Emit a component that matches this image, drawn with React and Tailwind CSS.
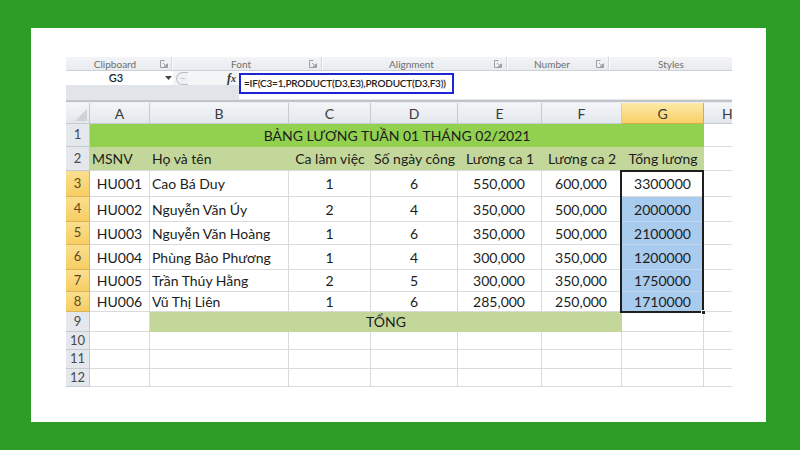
import React from "react";

// 列の幅 (行番号, A..H)
const rows = [
  { n: 3, h: "h-[26px]", a: "HU001", b: "Cao Bá Duy", c: "1", d: "6", e: "550,000", f: "600,000", g: "3300000" },
  { n: 4, h: "h-[25px]", a: "HU002", b: "Nguyễn Văn Úy", c: "2", d: "4", e: "350,000", f: "500,000", g: "2000000" },
  { n: 5, h: "h-[23px]", a: "HU003", b: "Nguyễn Văn Hoàng", c: "1", d: "6", e: "350,000", f: "500,000", g: "2100000" },
  { n: 6, h: "h-[25px]", a: "HU004", b: "Phùng Bảo Phương", c: "1", d: "4", e: "300,000", f: "350,000", g: "1200000" },
  { n: 7, h: "h-[22px]", a: "HU005", b: "Trần Thúy Hằng", c: "2", d: "5", e: "300,000", f: "350,000", g: "1750000" },
  { n: 8, h: "h-[20px]", a: "HU006", b: "Vũ Thị Liên", c: "1", d: "6", e: "285,000", f: "250,000", g: "1710000" },
];

const emptyRows = [
  { n: 10, h: "h-[18px]" },
  { n: 11, h: "h-[19px]" },
  { n: 12, h: "h-[18px]" },
];

const Launcher = () => (
  <svg width="8" height="8" viewBox="0 0 8 8" className="shrink-0">
    <path d="M0.5 0.5h4M0.5 0.5v7h7v-4" stroke="#9aa0a8" fill="none" />
    <path d="M3 3l3.5 3.5M4 6.5h2.5V4" stroke="#9aa0a8" fill="none" />
  </svg>
);

const RowHead = ({ n, hl }) => (
  <div
    className={
      hl
        ? "w-[24px] shrink-0 flex items-center justify-center bg-gradient-to-b from-[#fbdf8f] to-[#f6cd62] border-r border-b border-[#d8b45a] text-[13px] text-[#5a4a1c]"
        : "w-[24px] shrink-0 flex items-center justify-center bg-[#e4e7ec] border-r border-b border-[#c6cbd2] text-[13px] text-[#4a4a4a]"
    }
  >
    {n}
  </div>
);

const G = "border-r border-b border-[#dadada]";

const ColHead = ({ w, label, hl }) => (
  <div
    className={
      hl
        ? `${w} shrink-0 flex items-center justify-center bg-gradient-to-b from-[#fdeaa6] to-[#f8d064] border-r border-b border-[#d3ac52] text-[14px] text-[#3a3a3a]`
        : `${w} shrink-0 flex items-center justify-center bg-gradient-to-b from-[#f4f6f8] to-[#e3e7ec] border-r border-b border-[#c6cbd2] text-[14px] text-[#3a3a3a]`
    }
  >
    {label}
  </div>
);

export default function App() {
  return (
    <div className="w-[800px] h-[450px] bg-[#2c9e25] pt-[28px] pl-[31px] font-['Lato',sans-serif]">
      <div className="w-[735px] h-[394px] bg-white pt-[29px] pl-[35px]">
        <div className="w-[666px] overflow-hidden">
          {/* ribbon group labels */}
          <div className="h-[14px] flex bg-gradient-to-b from-[#f3f4f6] to-[#e8ebef] border-b border-[#cdd1d7] text-[10px] text-[#6f6f6f] leading-none">
            <div className="w-[106px] shrink-0 flex items-center pr-[3px] border-r border-[#d2d6dc]">
              <span className="flex-1 text-center pl-[4px]">Clipboard</span>
              <Launcher />
            </div>
            <div className="w-[150px] shrink-0 flex items-center pr-[4px] border-r border-[#d2d6dc] border-l border-l-white">
              <span className="flex-1 text-center">Font</span>
              <Launcher />
            </div>
            <div className="w-[185px] shrink-0 flex items-center pr-[4px] border-r border-[#d2d6dc] border-l border-l-white">
              <span className="flex-1 text-center pl-[6px]">Alignment</span>
              <Launcher />
            </div>
            <div className="w-[102px] shrink-0 flex items-center pr-[4px] border-r border-[#d2d6dc] border-l border-l-white">
              <span className="flex-1 text-center">Number</span>
              <Launcher />
            </div>
            <div className="w-[123px] shrink-0 flex items-center border-l border-l-white">
              <span className="flex-1 text-center">Styles</span>
            </div>
          </div>

          {/* formula bar */}
          <div className="h-[28px] flex">
            <div className="w-[173px] shrink-0 flex flex-col">
              <div className="h-[14px] flex">
                <div className="w-[107px] bg-white flex items-center relative">
                  <span className="flex-1 text-center text-[11px] font-semibold text-[#222] pl-[1px]">G3</span>
                  <svg width="7" height="4" viewBox="0 0 7 4" className="mr-[1px]">
                    <path d="M0 0h7L3.5 4z" fill="#444" />
                  </svg>
                </div>
                <div className="flex-1 bg-[#f4f5f7] flex items-center">
                  <div className="ml-[3px] w-[12px] h-[13px] rounded-l-full border border-r-0 border-[#b9bec5] bg-[#eef0f3] flex items-center justify-center">
                    <div className="w-[4px] h-[1px] bg-[#c3c7cd]" />
                  </div>
                  <span className="ml-auto mr-[3px] text-[12px] italic font-bold font-['Liberation_Serif',serif] text-[#333] leading-none">
                    f<span className="text-[10px]">x</span>
                  </span>
                </div>
              </div>
              <div className="flex-1 bg-[#e1e4e9]" />
            </div>
            <div className="flex-1 bg-white pt-[2px]">
              <div className="w-[215px] h-[21px] border-2 border-[#1c24d4] flex items-center pl-[3px] text-[10px] font-semibold text-[#1e1e1e] tracking-[-0.2px] whitespace-nowrap">
                =IF(C3=1,PRODUCT(D3,E3),PRODUCT(D3,F3))
              </div>
            </div>
          </div>
          <div className="h-[1px] bg-[#e4e6e9]" />
          <div className="h-[2px] bg-[#bfc4ca]" />
          <div className="h-[1px] bg-[#eceef1]" />

          {/* sheet grid */}
          <div className="relative w-[718px] text-[14px] text-[#1c1c1c]">
            <div className="h-[21px] flex">
              <div className="w-[24px] shrink-0 bg-gradient-to-b from-[#f4f6f8] to-[#e3e7ec] border-r border-b border-[#c6cbd2] relative">
                <svg width="12" height="12" viewBox="0 0 12 12" className="absolute right-[2px] bottom-[2px]">
                  <path d="M12 0V12H0z" fill="#cfd3d9" />
                </svg>
              </div>
              <ColHead w="w-[60px]" label="A" />
              <ColHead w="w-[139px]" label="B" />
              <ColHead w="w-[82px]" label="C" />
              <ColHead w="w-[87px]" label="D" />
              <ColHead w="w-[84px]" label="E" />
              <ColHead w="w-[80px]" label="F" />
              <ColHead w="w-[82px]" label="G" hl />
              <div className="w-[80px] shrink-0 flex items-center pl-[18px] bg-gradient-to-b from-[#f4f6f8] to-[#e3e7ec] border-b border-[#c6cbd2] text-[14px] text-[#3a3a3a]">
                H
              </div>
            </div>

            {/* row 1 */}
            <div className="h-[23px] flex">
              <RowHead n={1} />
              <div className="w-[614px] shrink-0 bg-[#92d050] flex items-center justify-center border-b border-[#92d050]">
                BẢNG LƯƠNG TUẦN 01 THÁNG 02/2021
              </div>
              <div className={`w-[80px] shrink-0 ${G}`} />
            </div>

            {/* row 2 */}
            <div className="h-[24px] flex">
              <RowHead n={2} />
              <div className="w-[614px] shrink-0 bg-[#c4d79b] flex items-center border-b border-[#dadada]">
                <div className="w-[60px] pl-[2px]">MSNV</div>
                <div className="w-[139px] pl-[2px]">Họ và tên</div>
                <div className="w-[82px] text-center">Ca làm việc</div>
                <div className="w-[87px] text-center">Số ngày công</div>
                <div className="w-[84px] text-center">Lương ca 1</div>
                <div className="w-[80px] text-center">Lương ca 2</div>
                <div className="w-[82px] text-center">Tổng lương</div>
              </div>
              <div className={`w-[80px] shrink-0 ${G}`} />
            </div>

            {/* data rows */}
            {rows.map((r) => (
              <div key={r.n} className={`${r.h} flex`}>
                <RowHead n={r.n} hl />
                <div className={`w-[60px] shrink-0 flex items-center justify-center ${G}`}>{r.a}</div>
                <div className={`w-[139px] shrink-0 flex items-center pl-[2px] ${G}`}>{r.b}</div>
                <div className={`w-[82px] shrink-0 flex items-center justify-center ${G}`}>{r.c}</div>
                <div className={`w-[87px] shrink-0 flex items-center justify-center ${G}`}>{r.d}</div>
                <div className={`w-[84px] shrink-0 flex items-center justify-end pr-[16px] ${G}`}>{r.e}</div>
                <div className={`w-[80px] shrink-0 flex items-center justify-end pr-[14px] ${G}`}>{r.f}</div>
                <div
                  className={
                    r.n === 3
                      ? "w-[82px] shrink-0 flex items-center justify-center bg-white border-r border-b border-[#dadada]"
                      : "w-[82px] shrink-0 flex items-center justify-center bg-[#a9cbee] border-r border-b border-[#c3d8ef]"
                  }
                >
                  {r.g}
                </div>
                <div className={`w-[80px] shrink-0 ${G}`} />
              </div>
            ))}

            {/* row 9 */}
            <div className="h-[20px] flex">
              <RowHead n={9} />
              <div className={`w-[60px] shrink-0 ${G}`} />
              <div className="w-[472px] shrink-0 bg-[#c4d79b] flex items-center justify-center border-b border-[#c4d79b]">
                TỔNG
              </div>
              <div className={`w-[82px] shrink-0 ${G}`} />
              <div className={`w-[80px] shrink-0 ${G}`} />
            </div>

            {emptyRows.map((r) => (
              <div key={r.n} className={`${r.h} flex`}>
                <RowHead n={r.n} />
                <div className={`w-[60px] shrink-0 ${G}`} />
                <div className={`w-[139px] shrink-0 ${G}`} />
                <div className={`w-[82px] shrink-0 ${G}`} />
                <div className={`w-[87px] shrink-0 ${G}`} />
                <div className={`w-[84px] shrink-0 ${G}`} />
                <div className={`w-[80px] shrink-0 ${G}`} />
                <div className={`w-[82px] shrink-0 ${G}`} />
                <div className={`w-[80px] shrink-0 ${G}`} />
              </div>
            ))}

            {/* selection G3:G8 */}
            <div className="absolute left-[554px] top-[67px] w-[84px] h-[143px] border-2 border-[#1e1e1e] pointer-events-none">
              <div className="absolute -right-[4px] -bottom-[4px] w-[5px] h-[5px] bg-[#1e1e1e] border border-white" />
            </div>
          </div>
        </div>
      </div>
    </div>
  );
}
